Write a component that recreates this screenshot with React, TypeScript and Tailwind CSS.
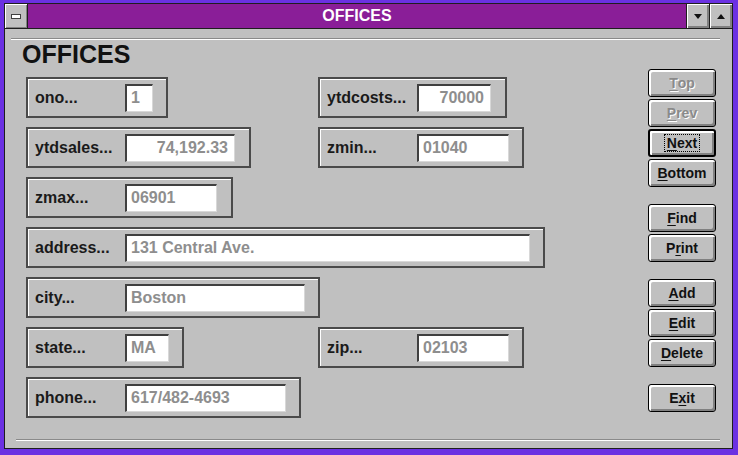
import React from "react";

type FieldProps = {
  label: string;
  value: string;
  w: string;
  fw: string;
  right?: boolean;
};

function Field({ label, value, w, fw, right }: FieldProps) {
  return (
    <div className={`${w} h-[41px] flex items-center border-2 border-[#4a4a4a] shadow-[inset_1px_1px_0_#ffffff] pl-[7px]`}>
      <span className="w-[90px] shrink-0 text-[16px] font-bold text-[#1a1a1a]">{label}</span>
      <div
        className={`${fw} h-[28px] shrink-0 flex items-center bg-white border-t-2 border-l-2 border-t-[#404040] border-l-[#404040] border-b border-r border-b-[#d8d8d8] border-r-[#d8d8d8] text-[16px] font-bold text-[#8e8e8e] ${
          right ? "justify-end pr-[6px]" : "pl-[4px]"
        }`}
      >
        {value}
      </div>
    </div>
  );
}

type BtnProps = {
  label: string;
  u: number;
  disabled?: boolean;
  def?: boolean;
};

function Btn({ label, u, disabled, def }: BtnProps) {
  const text = (
    <>
      {label.slice(0, u)}
      <span className="underline underline-offset-2">{label[u]}</span>
      {label.slice(u + 1)}
    </>
  );
  return (
    <div
      className={`h-[28px] w-[68px] rounded-[3px] bg-[#c0c0c0] flex items-center justify-center text-[14px] font-bold shadow-[inset_2px_2px_0_#ffffff,inset_-2px_-2px_0_#808080] ${
        def ? "border-2 border-black" : "border border-black"
      } ${disabled ? "text-[#8a8a8a] [text-shadow:1px_1px_0_#ffffff]" : "text-[#111]"}`}
    >
      {def ? <span className="border border-dotted border-black px-[2px] leading-[16px]">{text}</span> : text}
    </div>
  );
}

export default function App() {
  return (
    <div className="w-[738px] h-[455px] bg-[#6b31e2] pl-[4px] pt-[3px] pr-[5px] pb-[6px] font-['Liberation_Sans',Arial,sans-serif]">
      <div className="h-full border border-[#1e1e1e] flex flex-col">
        {/* Title bar */}
        <div className="h-[24px] shrink-0 flex bg-[#8a1e98]">
          <div className="w-[23px] border-r border-[#1e1e1e] bg-[#c0c0c0] flex items-center justify-center shadow-[inset_1px_1px_0_#ffffff,inset_-1px_-1px_0_#808080]">
            <div className="w-[10px] h-[5px] border border-[#404040] bg-white" />
          </div>
          <div className="flex-1 flex items-center justify-center text-white text-[16px] font-bold">OFFICES</div>
          <div className="w-[23px] border-l border-[#1e1e1e] bg-[#c0c0c0] flex items-center justify-center shadow-[inset_1px_1px_0_#ffffff,inset_-2px_-2px_0_#808080]">
            <svg width="8" height="5" viewBox="0 0 8 5">
              <path d="M0 0H8L4 5Z" fill="#111" />
            </svg>
          </div>
          <div className="w-[23px] border-l border-[#1e1e1e] bg-[#c0c0c0] flex items-center justify-center shadow-[inset_1px_1px_0_#ffffff,inset_-2px_-2px_0_#808080]">
            <svg width="8" height="5" viewBox="0 0 8 5">
              <path d="M0 5H8L4 0Z" fill="#111" />
            </svg>
          </div>
        </div>
        <div className="h-px bg-[#1e1e1e] shrink-0" />

        {/* Client */}
        <div className="flex-1 bg-[#c0c0c0] flex flex-col">
          <div className="mt-[9px] ml-[6px] mr-[12px] border-t border-[#8a8a8a] border-b border-b-white" />
          <div className="flex-1 flex items-start">
            <div className="pl-[21px] pt-[2px]">
              <h1 className="-ml-[4px] text-[25px] leading-none font-bold text-[#111] h-[24px]">OFFICES</h1>
              <div className="mt-[11px] flex flex-col gap-[9px]">
                <div className="flex">
                  <div className="w-[292px]">
                    <Field label="ono..." value="1" w="w-[142px]" fw="w-[28px]" />
                  </div>
                  <Field label="ytdcosts..." value="70000" w="w-[189px]" fw="w-[74px]" right />
                </div>
                <div className="flex">
                  <div className="w-[292px]">
                    <Field label="ytdsales..." value="74,192.33" w="w-[225px]" fw="w-[110px]" right />
                  </div>
                  <Field label="zmin..." value="01040" w="w-[206px]" fw="w-[92px]" />
                </div>
                <div className="flex">
                  <Field label="zmax..." value="06901" w="w-[207px]" fw="w-[92px]" />
                </div>
                <div className="flex">
                  <Field label="address..." value="131 Central Ave." w="w-[519px]" fw="w-[405px]" />
                </div>
                <div className="flex">
                  <Field label="city..." value="Boston" w="w-[294px]" fw="w-[180px]" />
                </div>
                <div className="flex">
                  <div className="w-[292px]">
                    <Field label="state..." value="MA" w="w-[158px]" fw="w-[44px]" />
                  </div>
                  <Field label="zip..." value="02103" w="w-[206px]" fw="w-[92px]" />
                </div>
                <div className="flex">
                  <Field label="phone..." value="617/482-4693" w="w-[275px]" fw="w-[161px]" />
                </div>
              </div>
            </div>

            <div className="ml-auto mr-[16px] pt-[29px] flex flex-col gap-[17px]">
              <div className="flex flex-col gap-[2px]">
                <Btn label="Top" u={0} disabled />
                <Btn label="Prev" u={0} disabled />
                <Btn label="Next" u={0} def />
                <Btn label="Bottom" u={0} />
              </div>
              <div className="flex flex-col gap-[2px]">
                <Btn label="Find" u={0} />
                <Btn label="Print" u={1} />
              </div>
              <div className="flex flex-col gap-[2px]">
                <Btn label="Add" u={0} />
                <Btn label="Edit" u={0} />
                <Btn label="Delete" u={0} />
              </div>
              <div className="flex flex-col gap-[2px]">
                <Btn label="Exit" u={1} />
              </div>
            </div>
          </div>
          <div className="mb-[7px] ml-[11px] mr-[12px] border-t border-[#8a8a8a] border-b border-b-white" />
        </div>
      </div>
    </div>
  );
}
